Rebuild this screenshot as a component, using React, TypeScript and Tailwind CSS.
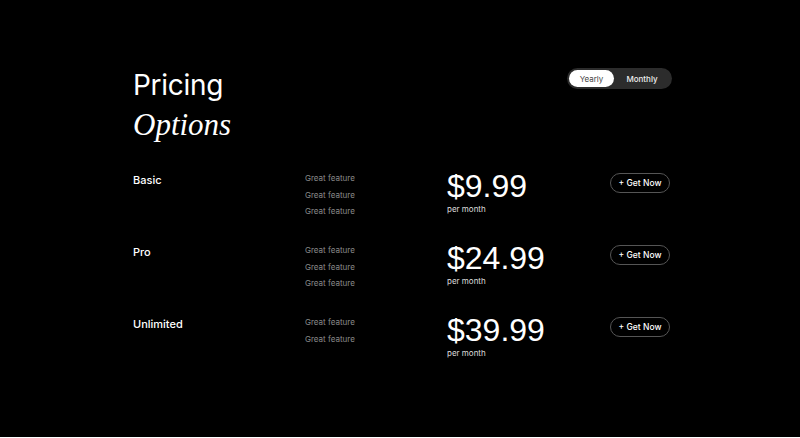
import React from "react";

const plans = [
  { name: "Basic", features: 3, price: "$9.99" },
  { name: "Pro", features: 3, price: "$24.99" },
  { name: "Unlimited", features: 2, price: "$39.99" },
];

export default function App() {
  return (
    <div
      className="h-[437px] w-full bg-black text-white"
      style={{ fontFamily: "Inter, 'Noto Sans', sans-serif" }}
    >
      <div className="mx-auto w-[540px] pl-[3px] pt-[68px]">
        <div className="flex items-start justify-between">
          <div>
            <div className="text-[28px] leading-[34px] font-normal tracking-[-0.3px]">Pricing</div>
            <div
              className="mt-[5px] text-[31px] leading-[35px] italic"
              style={{ fontFamily: "'Liberation Serif', 'Times New Roman', serif" }}
            >
              Options
            </div>
          </div>
          <div className="-mr-[2px] flex h-[21px] items-center rounded-full bg-[#2c2c2c] p-[2px]">
            <div className="flex h-[17px] w-[45px] items-center justify-center rounded-full bg-white text-[8px] text-[#444]">
              Yearly
            </div>
            <div className="flex h-[17px] w-[56px] items-center justify-center text-[8px] font-medium text-[#eee]">
              Monthly
            </div>
          </div>
        </div>

        <div className="mt-[28px] flex flex-col">
          {plans.map((p) => (
            <div key={p.name} className="grid h-[72px] grid-cols-[172px_142px_1fr_auto]">
              <div className="mt-[2px] text-[11px] leading-[16px] font-medium">{p.name}</div>
              <div className="flex flex-col text-[8px] leading-[16.5px] text-[#8a8a8a]">
                {Array.from({ length: p.features }).map((_, i) => (
                  <div key={i}>Great feature</div>
                ))}
              </div>
              <div className="flex flex-col">
                <div
                  className="text-[32px] leading-[32px] font-normal"
                  style={{ fontFamily: "'Liberation Sans', Arial, sans-serif" }}
                >
                  {p.price}
                </div>
                <div className="mt-[1px] text-[8px] leading-[12px] text-[#ddd]">per month</div>
              </div>
              <div className="mt-[3px]">
                <button className="flex h-[20px] w-[60px] items-center justify-center rounded-full border border-[#555] text-[8.5px] font-medium text-white">
                  + Get Now
                </button>
              </div>
            </div>
          ))}
        </div>
      </div>
    </div>
  );
}
